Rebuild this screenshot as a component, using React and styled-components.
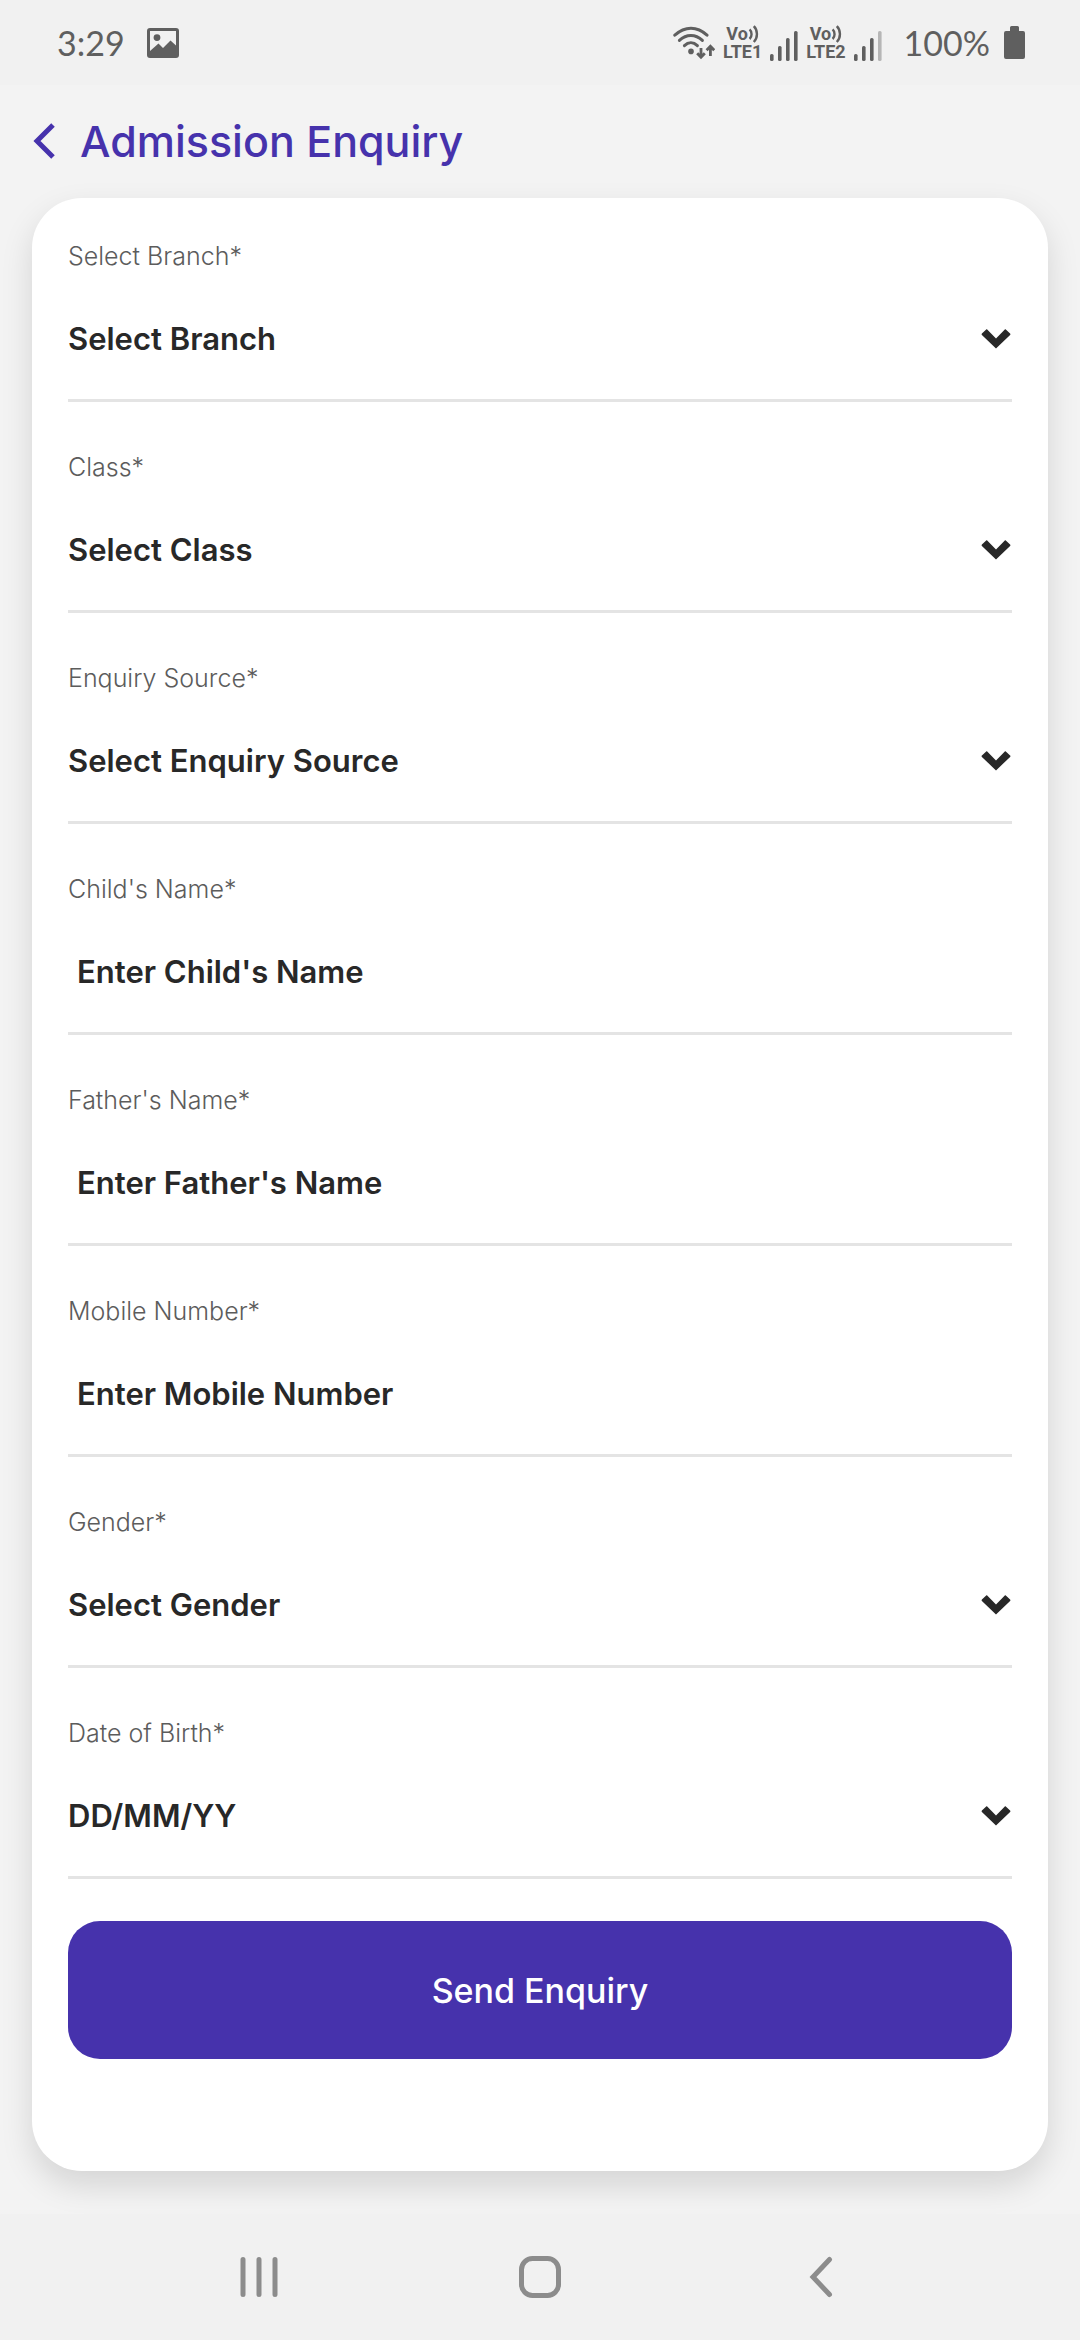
import React from "react";
import styled, { createGlobalStyle } from "styled-components";

const GlobalStyle = createGlobalStyle`
  *, *::before, *::after { box-sizing: border-box; }
  body {
    margin: 0;
    background: #f3f3f3;
    font-family: Inter, "Liberation Sans", sans-serif;
  }
  button, input, select { font: inherit; }
`;

const Screen = styled.div`
  min-height: 100vh;
  display: flex;
  flex-direction: column;
  background: #f3f3f3;
`;

const StatusBar = styled.div`
  display: flex;
  align-items: center;
  justify-content: space-between;
  height: 85px;
  padding: 0 55px 0 57px;
  background: #f1f1f1;
  color: #5f5f5f;
  svg { display: block; flex: none; }
`;

const StatusGroup = styled.div`
  display: flex;
  align-items: center;
  gap: ${(p) => p.$gap}px;
`;

const StatusText = styled.span`
  font: 400 34px/42px Lato, sans-serif;
`;

const Carrier = styled.div`
  display: flex;
  align-items: flex-end;
  gap: 8px;
`;

const Volte = styled.div`
  display: flex;
  flex-direction: column;
  align-items: center;
  font: 700 18px/18px Roboto, sans-serif;
`;

const VolteTop = styled.span`
  display: flex;
  align-items: center;
`;

const Header = styled.header`
  display: flex;
  align-items: center;
  gap: 24px;
  padding: 31px 32px 32px;
  color: #4632ac;
`;

const IconButton = styled.button`
  display: flex;
  align-items: center;
  justify-content: center;
  padding: 0;
  border: 0;
  background: none;
  color: inherit;
  cursor: pointer;
`;

const Title = styled.h1`
  margin: 0;
  font-size: 43px;
  line-height: 50px;
  font-weight: 500;
`;

const Card = styled.form`
  display: flex;
  flex-direction: column;
  gap: 42px;
  margin: 0 32px 43px;
  padding: 42px 36px 112px;
  border-radius: 50px;
  background: #ffffff;
  box-shadow: 0 14px 32px rgba(0, 0, 0, 0.13);
`;

const Fields = styled.div`
  display: flex;
  flex-direction: column;
  gap: 49px;
`;

const Field = styled.div`
  display: flex;
  flex-direction: column;
  gap: 6px;
  border-bottom: 3px solid #e4e4e4;
`;

const Label = styled.label`
  font-size: 25px;
  line-height: 32px;
  font-weight: 300;
  color: #5c5c5c;
`;

const Control = styled.div`
  display: grid;
  grid-template-columns: minmax(0, 1fr) auto;
  align-items: center;
  height: 121px;
  color: #282828;
`;

const Select = styled.select`
  grid-area: 1 / 1 / 2 / 3;
  width: 100%;
  height: 100%;
  padding: 0;
  border: 0;
  outline: 0;
  appearance: none;
  background: transparent;
  color: inherit;
  font-size: 31px;
  font-weight: 600;
`;

const Input = styled.input`
  width: 100%;
  height: 100%;
  padding: 0 0 0 ${(p) => (p.$inset ? 9 : 0)}px;
  border: 0;
  outline: 0;
  background: transparent;
  color: inherit;
  font-size: 31px;
  font-weight: 600;
  &::placeholder { color: inherit; opacity: 1; }
`;

const ArrowSlot = styled.span`
  grid-area: 1 / 2;
  display: flex;
  padding-right: 1px;
  pointer-events: none;
`;

const Submit = styled.button`
  height: 138px;
  border: 0;
  border-radius: 32px;
  background: #4632ac;
  color: #ffffff;
  font-size: 34px;
  font-weight: 500;
  cursor: pointer;
`;

const NavBar = styled.nav`
  display: grid;
  grid-template-columns: repeat(3, 26%);
  justify-content: center;
  height: 126px;
  margin-top: auto;
  background: #f1f1f1;
  color: #8c8c8c;
`;

function Wifi() {
  return (
    <svg width="42" height="34" viewBox="0 0 42 34" fill="none" stroke="currentColor">
      <g strokeWidth="3" strokeLinecap="round">
        <path d="M1.8 9.2C12 0 24 0 34 9.2" />
        <path d="M6.4 14.4c7-6.6 16-6.6 23 0" />
        <path d="M11.4 19.6c4-3.8 9-3.8 13 0" />
      </g>
      <circle cx="18" cy="25.4" r="2.8" fill="currentColor" stroke="none" />
      <g strokeWidth="2.8">
        <path d="M28 22v9M24.2 27.2l3.8 4 3.8-4" />
        <path d="M37.4 30V20M33.6 24.2l3.8-4 3.8 4" />
      </g>
    </svg>
  );
}

function Waves() {
  return (
    <svg width="11" height="18" viewBox="0 0 11 18" fill="none" stroke="currentColor" strokeWidth="2.4">
      <path d="M1.6 4.4c2.6 2.4 2.6 7.2 0 9.6M5.8 1.2c4.2 4.2 4.2 11.6 0 15.8" />
    </svg>
  );
}

function Signal({ strength }) {
  return (
    <svg width="28" height="30" viewBox="0 0 28 30" fill="currentColor">
      {[7, 15, 23, 30].map((h, i) => (
        <rect key={h} x={i * 8} y={30 - h} width="3.6" height={h} rx="1.6" opacity={i < strength ? 1 : 0.4} />
      ))}
    </svg>
  );
}

function CarrierStatus({ name, strength }) {
  return (
    <Carrier>
      <Volte>
        <VolteTop>Vo<Waves /></VolteTop>
        <span>{name}</span>
      </Volte>
      <Signal strength={strength} />
    </Carrier>
  );
}

function DownArrow() {
  return (
    <svg width="30" height="20" viewBox="0 0 30 20" fill="currentColor">
      <path d="M5.2.5.9 4.500c-.5.500-.5.900 0 1.400L15 19.500 29.100 5.900c.500-.5.500-.9 0-1.400L24.800.5c-.4-.3-.7-.3-1 0L15 9.600 6.200.5c-.3-.3-.6-.3-1 0z" />
    </svg>
  );
}

const FIELDS = [
  { id: "branch", label: "Select Branch*", text: "Select Branch", kind: "select" },
  { id: "class", label: "Class*", text: "Select Class", kind: "select" },
  { id: "source", label: "Enquiry Source*", text: "Select Enquiry Source", kind: "select" },
  { id: "child", label: "Child's Name*", text: "Enter Child's Name", kind: "text" },
  { id: "father", label: "Father's Name*", text: "Enter Father's Name", kind: "text" },
  { id: "mobile", label: "Mobile Number*", text: "Enter Mobile Number", kind: "tel" },
  { id: "gender", label: "Gender*", text: "Select Gender", kind: "select" },
  { id: "dob", label: "Date of Birth*", text: "DD/MM/YY", kind: "date" },
];

function FormField({ id, label, text, kind }) {
  const hasArrow = kind === "select" || kind === "date";
  return (
    <Field>
      <Label htmlFor={id}>{label}</Label>
      <Control>
        {kind === "select" ? (
          <Select id={id} name={id} defaultValue="">
            <option value="">{text}</option>
          </Select>
        ) : (
          <Input id={id} name={id} type={kind === "tel" ? "tel" : "text"} placeholder={text} $inset={!hasArrow} />
        )}
        {hasArrow && <ArrowSlot><DownArrow /></ArrowSlot>}
      </Control>
    </Field>
  );
}

export default function App() {
  return (
    <Screen>
      <GlobalStyle />
      <StatusBar>
        <StatusGroup $gap={22}>
          <StatusText>3:29</StatusText>
          <svg width="32" height="30" viewBox="0 0 32 30">
            <path
              fill="currentColor"
              fillRule="evenodd"
              d="M3 0h26a3 3 0 0 1 3 3v24a3 3 0 0 1-3 3H3a3 3 0 0 1-3-3V3a3 3 0 0 1 3-3zM3 3v20l8.500-7.500L16 20l7.500-7.500L29 17.500V3zM10 6.200a3.400 3.400 0 1 1 0 6.800 3.400 3.400 0 0 1 0-6.800z"
            />
          </svg>
        </StatusGroup>
        <StatusGroup $gap={22}>
          <StatusGroup $gap={8}>
            <Wifi />
            <CarrierStatus name="LTE1" strength={4} />
            <CarrierStatus name="LTE2" strength={3} />
          </StatusGroup>
          <StatusGroup $gap={14}>
            <StatusText>100%</StatusText>
            <svg width="21" height="33" viewBox="0 0 21 33" fill="currentColor">
              <path d="M6 1.500Q6 0 7.500 0h6Q15 0 15 1.500V5h4q2 0 2 2v24q0 2-2 2H2q-2 0-2-2V7q0-2 2-2h4z" />
            </svg>
          </StatusGroup>
        </StatusGroup>
      </StatusBar>

      <Header>
        <IconButton type="button" aria-label="Back">
          <svg width="24" height="38" viewBox="0 0 24 38" fill="none" stroke="currentColor" strokeWidth="5">
            <path d="M21 3 5 19l16 16" />
          </svg>
        </IconButton>
        <Title>Admission Enquiry</Title>
      </Header>

      <Card onSubmit={(e) => e.preventDefault()}>
        <Fields>
          {FIELDS.map((f) => <FormField key={f.id} {...f} />)}
        </Fields>
        <Submit type="submit">Send Enquiry</Submit>
      </Card>

      <NavBar>
        <IconButton type="button" aria-label="Recent apps">
          <svg width="40" height="42" viewBox="0 0 40 42" stroke="currentColor" strokeWidth="5" strokeLinecap="round">
            <path d="M4 3.500v35M20 3.500v35M36 3.500v35" />
          </svg>
        </IconButton>
        <IconButton type="button" aria-label="Home">
          <svg width="42" height="42" viewBox="0 0 42 42" fill="none" stroke="currentColor" strokeWidth="5">
            <rect x="2.500" y="2.500" width="37" height="37" rx="11" />
          </svg>
        </IconButton>
        <IconButton type="button" aria-label="Go back">
          <svg width="24" height="42" viewBox="0 0 24 42" fill="none" stroke="currentColor" strokeWidth="5" strokeLinecap="round">
            <path d="M20.500 3.500 4 21l16.500 17.500" />
          </svg>
        </IconButton>
      </NavBar>
    </Screen>
  );
}
